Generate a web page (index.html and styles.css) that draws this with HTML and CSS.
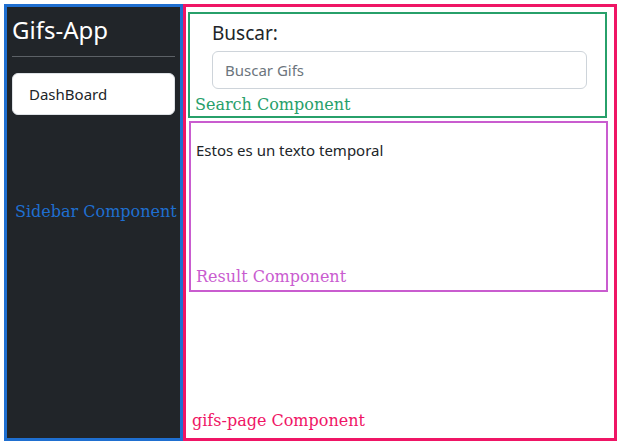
FILE: index.html
```html
<!DOCTYPE html>
<html>
<head>
<meta charset="utf-8">
<link rel="stylesheet" href="styles.css">
</head>
<body>
<div class="app">
  <aside class="sidebar">
    <h3 class="brand">Gifs-App</h3>
    <hr class="divider">
    <button class="nav-btn">DashBoard</button>
    <p class="tag tag-blue">Sidebar Component</p>
  </aside>
  <main class="page">
    <section class="search">
      <h5 class="search-title">Buscar:</h5>
      <input class="search-input" type="text" placeholder="Buscar Gifs">
      <p class="tag tag-green">Search Component</p>
    </section>
    <section class="result">
      <p class="result-text">Estos es un texto temporal</p>
      <p class="tag tag-purple">Result Component</p>
    </section>
    <p class="tag tag-pink page-tag">gifs-page Component</p>
  </main>
</div>
</body>
</html>
```
FILE: styles.css
```css
* { box-sizing: border-box; }
html, body { margin: 0; padding: 0; background: #fff; }
body {
  font-family: "Noto Sans", "Open Sans", sans-serif;
  color: #212529;
}
.app {
  display: flex;
  margin: 4px 3px 4px 4px;
  height: 437px;
}
.sidebar {
  width: 179px;
  flex: none;
  background: #212529;
  border: 3px solid #1f6fd0;
  padding: 0 5px 0 5px;
  display: flex;
  flex-direction: column;
}
.brand {
  margin: 8px 0 0 0;
  font-size: 24px;
  font-weight: 400;
  color: #fff;
  line-height: 30px;
}
.divider {
  margin: 11px 0 16px 0;
  border: 0;
  border-top: 1px solid #5c6166;
}
.nav-btn {
  margin: 0;
  height: 42px;
  background: #fff;
  border: 1px solid #dee2e6;
  border-radius: 6px;
  text-align: left;
  padding: 0 16px;
  font-family: inherit;
  font-size: 15px;
  color: #212529;
}
.tag {
  margin: 0;
  font-family: "DejaVu Serif", serif;
  font-size: 16px;
  line-height: 20px;
  white-space: nowrap;
}
.tag-blue { color: #1f6fd0; margin: 87px 0 0 3px; }
.tag-green { color: #27a06a; }
.tag-purple { color: #c95ccf; }
.tag-pink { color: #ef1565; }
.page {
  flex: 1;
  border: 3px solid #ef1565;
  padding: 5px 7px 0 2px;
  display: flex;
  flex-direction: column;
}
.search {
  border: 2px solid #27a06a;
  padding: 7px 5px 0 5px;
  height: 106px;
}
.search-title {
  margin: 0 0 0 17px;
  font-size: 19px;
  font-weight: 400;
  line-height: 24px;
}
.search-input {
  display: block;
  margin: 6px 13px 6px 17px;
  width: calc(100% - 30px);
  height: 38px;
  border: 1px solid #ced4da;
  border-radius: 6px;
  padding: 0 12px;
  font-family: inherit;
  font-size: 15px;
  color: #212529;
}
.search-input::placeholder { color: #6c757d; }
.result {
  margin: 3px -1px 0 1px;
  border: 2px solid #c95ccf;
  height: 171px;
  padding: 16px 5px 0 5px;
  display: flex;
  flex-direction: column;
}
.result-text {
  margin: 0;
  font-size: 15px;
  line-height: 22px;
  flex: 1;
}
.result .tag { margin-bottom: 3px; }
.page-tag { margin: auto 0 7px 4px; }
```
